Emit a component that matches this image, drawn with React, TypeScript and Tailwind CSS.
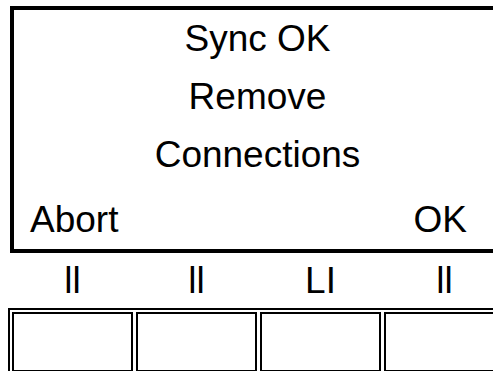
import React from 'react';

const labels = ['ll', 'll', 'LI', 'll'];

export default function App() {
  return (
    <div
      className="w-[493px] h-[371px] overflow-hidden bg-white text-black"
      style={{ fontFamily: '"Liberation Sans", Arial, sans-serif' }}
    >
      <div className="w-[520px] pt-[6px] pl-[8px]">
        {/* display panel */}
        <div className="ml-[2px] w-[495px] border-4 border-black text-[37px] leading-[58px]">
          <div className="text-center">Sync OK</div>
          <div className="text-center">Remove</div>
          <div className="text-center">Connections</div>
          <div className="mt-[7px] flex justify-between pl-[16px] pr-[34px]">
            <span>Abort</span>
            <span>OK</span>
          </div>
        </div>

        {/* key labels */}
        <div className="mt-[2px] flex gap-[3px] pl-[4px] text-[37px] leading-[52px]">
          {labels.map((l, i) => (
            <div key={i} className="w-[121px] text-center">
              {l}
            </div>
          ))}
        </div>

        {/* keys */}
        <div className="mt-[1px] flex w-max gap-[3px] border-2 border-black p-[2px]">
          {labels.map((_, i) => (
            <div key={i} className="h-[60px] w-[121px] border-2 border-black" />
          ))}
        </div>
      </div>
    </div>
  );
}
